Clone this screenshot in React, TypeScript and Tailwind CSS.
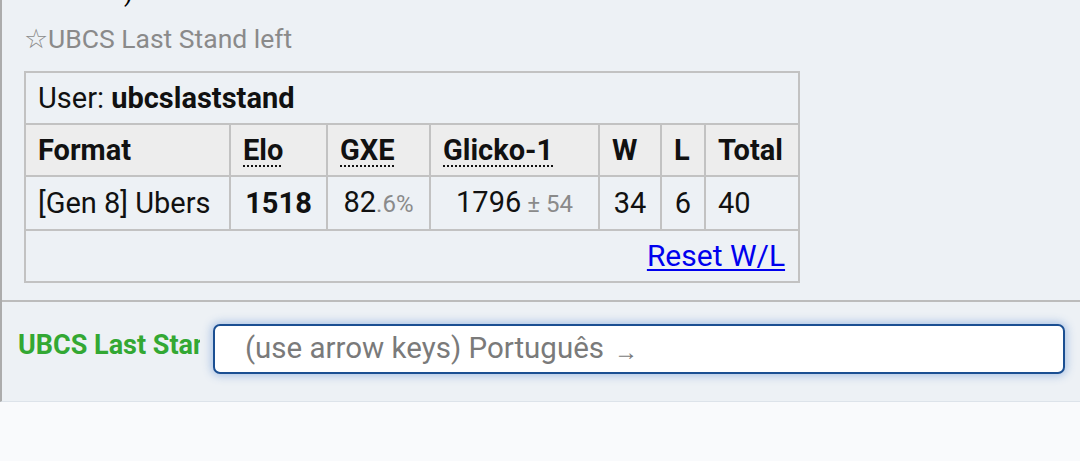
import React from "react";

export default function App() {
  const cell = "border-2 border-[#c2c2c2] px-[12px] py-[10px] leading-[30px]";
  return (
    <div className="w-[1080px] h-[461px] bg-[#f9fafc] font-['Roboto','Liberation_Sans',sans-serif] overflow-hidden">
      <div className="h-[402px] bg-[#edf1f5] border-l-2 border-[#acacac] border-b border-b-[#dde3ea] flex flex-col">
        <div className="h-[300px] pl-[22px] overflow-hidden">
          <div className="h-[8px] overflow-hidden">
            <div className="-mt-[24px] pl-[100px] text-[26px] leading-[32px] text-black">)</div>
          </div>
          <div className="mt-[15px] text-[26.5px] leading-[32px] text-[#8a8a8a]">☆UBCS Last Stand left</div>
          <table className="mt-[16px] table-fixed border-collapse w-[774px] text-[29px] text-[#111]">
            <colgroup>
              <col className="w-[205px]" />
              <col className="w-[97px]" />
              <col className="w-[103px]" />
              <col className="w-[169px]" />
              <col className="w-[62px]" />
              <col className="w-[44px]" />
              <col className="w-[94px]" />
            </colgroup>
            <tbody>
              <tr>
                <td colSpan={7} className={cell + " text-left"}>
                  User: <strong className="font-bold">ubcslaststand</strong>
                </td>
              </tr>
              <tr className="bg-[#ededed]">
                <th className={cell + " text-left font-bold"}>Format</th>
                <th className={cell + " text-left font-bold"}>
                  <span className="underline decoration-dotted decoration-2 underline-offset-[5px]">Elo</span>
                </th>
                <th className={cell + " text-left font-bold"}>
                  <span className="underline decoration-dotted decoration-2 underline-offset-[5px]">GXE</span>
                </th>
                <th className={cell + " text-left font-bold"}>
                  <span className="underline decoration-dotted decoration-2 underline-offset-[5px]">Glicko-1</span>
                </th>
                <th className={cell + " text-left font-bold"}>W</th>
                <th className={cell + " text-left font-bold"}>L</th>
                <th className={cell + " text-left font-bold"}>Total</th>
              </tr>
              <tr>
                <td className={cell + " text-left whitespace-nowrap"}>[Gen 8] Ubers</td>
                <td className={cell + " text-center font-bold"}>1518</td>
                <td className={cell + " text-center whitespace-nowrap"}>
                  82<span className="text-[24px] text-[#8a8a8a]">.6%</span>
                </td>
                <td className={cell + " text-center whitespace-nowrap"}>
                  1796<span className="text-[24px] text-[#8a8a8a]"> ± 54</span>
                </td>
                <td className={cell + " text-center"}>34</td>
                <td className={cell + " text-center"}>6</td>
                <td className={cell + " text-left"}>40</td>
              </tr>
              <tr>
                <td colSpan={7} className={cell + " text-right pr-[13px]"}>
                  <a href="#" className="text-[#0000ee] text-[30px] underline underline-offset-[3px] decoration-2">Reset W/L</a>
                </td>
              </tr>
            </tbody>
          </table>
        </div>
        <div className="flex-1 border-t-2 border-[#bcbcbc] flex items-center">
          <div className="ml-[16px] w-[182px] overflow-hidden whitespace-nowrap text-[27px] font-bold text-[#33a833] -mt-[12px]">
            UBCS Last Stand
          </div>
          <div className="ml-[13px] -mt-[6px] w-[852px] h-[50px] rounded-[7px] border-2 border-[#1b4f92] bg-white shadow-[0_0_8px_2px_rgba(90,140,210,0.45)] flex items-center pl-[30px] text-[29.5px] text-[#7a7a7a] whitespace-nowrap">
            (use arrow keys) Português <span className="ml-[10px] text-[24px] mt-[6px]">→</span>
          </div>
        </div>
      </div>
    </div>
  );
}
